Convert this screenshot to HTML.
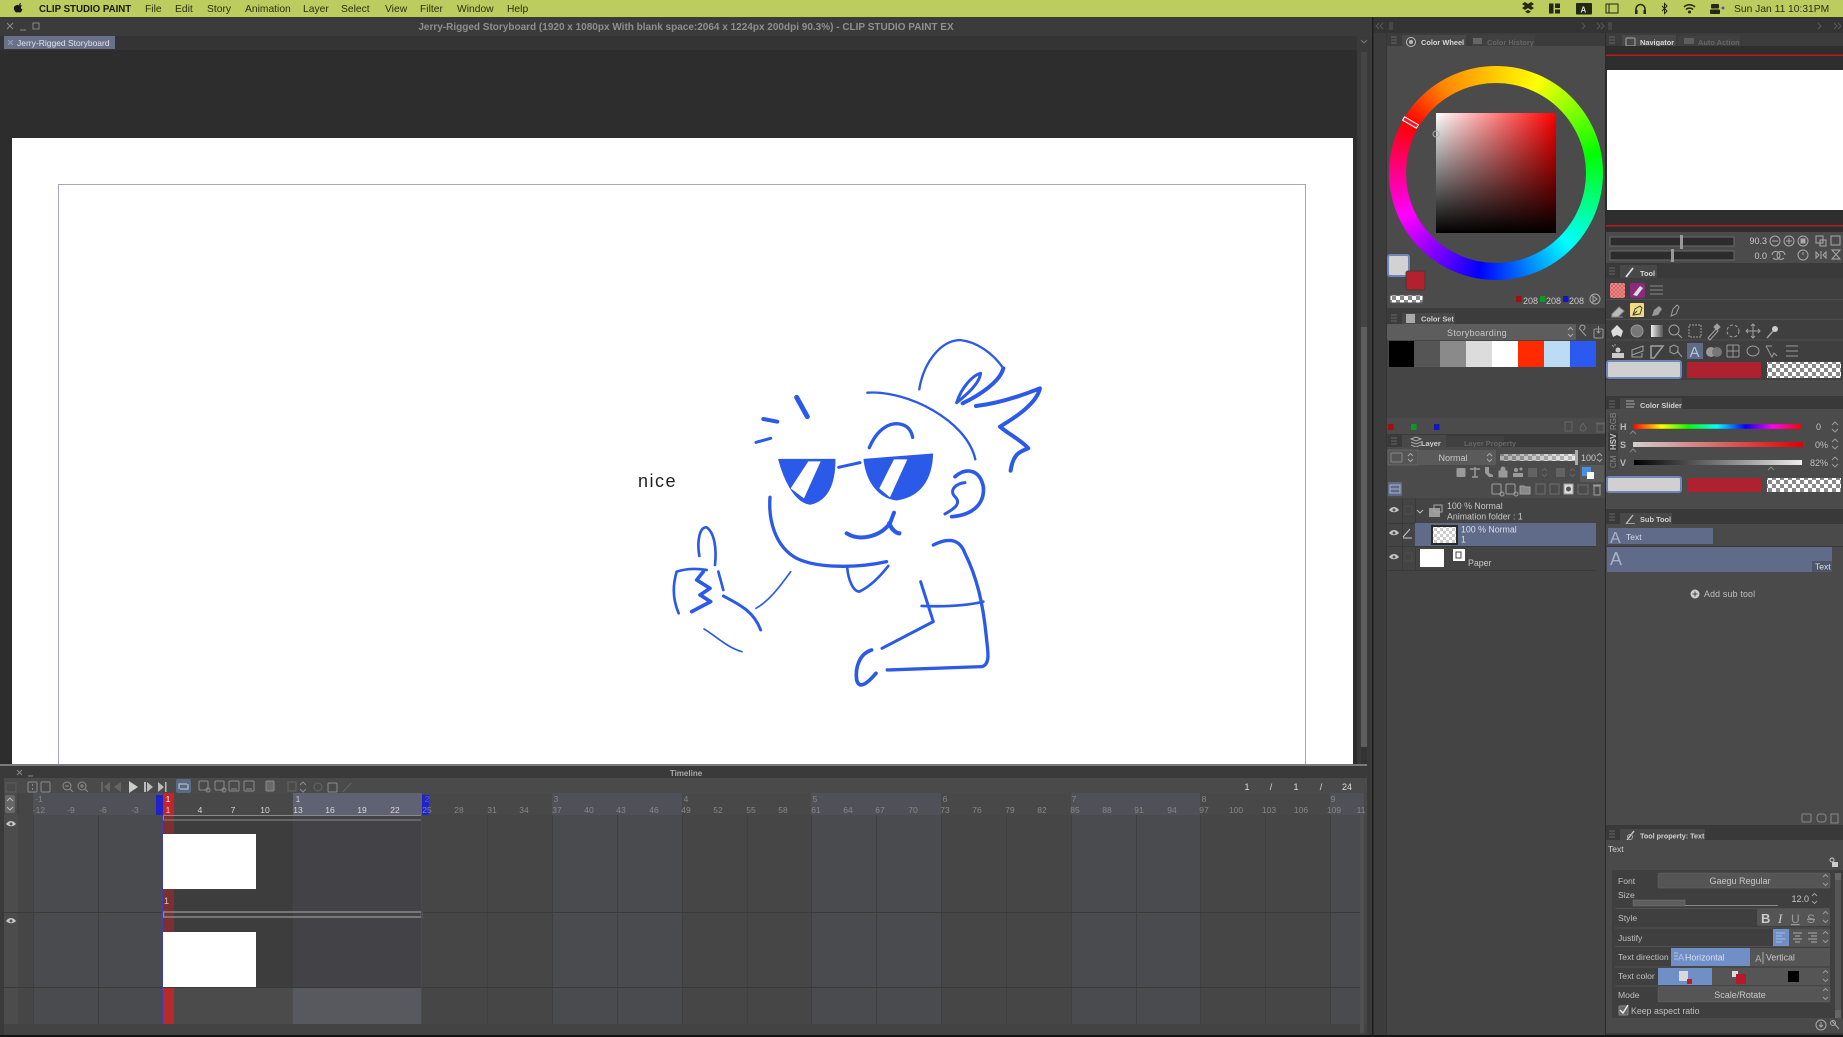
<!DOCTYPE html>
<html lang="en"><head><meta charset="utf-8"><title>Clip Studio Paint</title>
<style>
html,body{margin:0;padding:0;background:#3a3a3a;width:1843px;height:1037px;overflow:hidden}
svg{position:absolute;left:0;top:0;display:block}
svg text{font-family:"Liberation Sans",sans-serif}
#wheel{position:absolute;left:1389px;top:66px;width:214px;height:214px;border-radius:50%;background:conic-gradient(from -60deg,#f00,#f80 8%,#ff0,#0f0,#0ff,#00f,#f0f,#f00)}
#wheel i{position:absolute;left:17px;top:17px;width:180px;height:180px;border-radius:50%;background:#4b4b4b}
#sq{position:absolute;left:1436px;top:113px;width:120px;height:120px;background:linear-gradient(to bottom,rgba(0,0,0,0),#000),linear-gradient(to right,#fff,#f00)}
</style></head><body>
<svg width="1843" height="1037" viewBox="0 0 1843 1037" xmlns="http://www.w3.org/2000/svg">
<defs>
<pattern id="ck" width="8" height="8" patternUnits="userSpaceOnUse"><rect width="8" height="8" fill="#fff"/><rect width="4" height="4" fill="#888"/><rect x="4" y="4" width="4" height="4" fill="#888"/></pattern>
<pattern id="ck2" width="6" height="6" patternUnits="userSpaceOnUse"><rect width="6" height="6" fill="#fff"/><rect width="3" height="3" fill="#ccc"/><rect x="3" y="3" width="3" height="3" fill="#ccc"/></pattern>
<pattern id="hatch" width="4" height="4" patternUnits="userSpaceOnUse"><rect width="4" height="4" fill="#d86060"/><path d="M0 4L4 0M0 0L4 4" stroke="#f0a0a0" stroke-width=".6"/></pattern>
<g id="eye"><path d="M-5 0C-2-4 2-4 5 0C2 3-2 3-5 0Z" fill="#c8c8c8"/><circle r="1.500" fill="#555"/></g>
<g id="grip"><path d="M-3-3H3M-3 0H3M-3 3H3" stroke="#666" stroke-width="1"/></g>
<linearGradient id="hue"><stop offset="0" stop-color="#f00"/><stop offset=".17" stop-color="#ff0"/><stop offset=".33" stop-color="#0f0"/><stop offset=".5" stop-color="#0ff"/><stop offset=".67" stop-color="#00f"/><stop offset=".83" stop-color="#f0f"/><stop offset="1" stop-color="#f00"/></linearGradient>
<linearGradient id="sat"><stop offset="0" stop-color="#d0d0d0"/><stop offset="1" stop-color="#e00000"/></linearGradient>
<linearGradient id="val"><stop offset="0" stop-color="#000"/><stop offset="1" stop-color="#eee"/></linearGradient>
<linearGradient id="op"><stop offset="0" stop-color="#777"/><stop offset="1" stop-color="#ddd"/></linearGradient>
<linearGradient id="gs"><stop offset="0" stop-color="#eee"/><stop offset="1" stop-color="#555"/></linearGradient>
</defs>

<!-- base -->
<rect width="1843" height="1037" fill="#3a3a3a"/>
<!-- menu bar -->
<rect width="1843" height="17" fill="#bdcc5e"/>
<path d="M16 5.500c1-1 2.300-.8 3 0 .7-.4 2-.8 3 .3-1.600 1-1.200 3 .4 3.700-.6 1.600-1.500 3-2.400 3-.8 0-1-.4-1.700-.4s-1 .4-1.700.4c-1.400 0-3-3-2.700-5 .2-1 .9-1.800 2.100-2zM19 5.300c0-1.300.9-2.200 2-2.300.1 1.300-.8 2.200-2 2.300z" fill="#1a1a1a"/>
<g font-size="10.300" fill="#2b3010">
<text x="39" y="12" font-weight="700" font-size="9.700" fill="#181c08">CLIP STUDIO PAINT</text>
<text x="145" y="12">File</text><text x="175" y="12">Edit</text><text x="207" y="12">Story</text><text x="245" y="12">Animation</text><text x="303" y="12">Layer</text><text x="341" y="12">Select</text><text x="385" y="12">View</text><text x="420" y="12">Filter</text><text x="457" y="12">Window</text><text x="507" y="12">Help</text>
</g>
<!-- menu extras -->
<g fill="#232810">
<path d="M1522 4l3 2-3 2 3 2 3-2 3 2 3-2-3-2 3-2-3-2-3 2-3-2zM1525 11.500l3 2 3-2-3-1.500z"/>
<rect x="1549" y="3.500" width="4.500" height="10"/><rect x="1555" y="3.500" width="5" height="4.500"/><rect x="1555" y="9.500" width="5" height="4"/>
<rect x="1576" y="3" width="16" height="11.500" rx="1"/>
<path d="M1606 4h12v9h-12z" fill="none" stroke="#232810"/><path d="M1609 4v9" stroke="#232810"/>
<path d="M1636 12v-3a4.500 4.500 0 0 1 9 0v3" fill="none" stroke="#232810" stroke-width="1.500"/><rect x="1635" y="10" width="2.500" height="4"/><rect x="1643.500" y="10" width="2.500" height="4"/>
<path d="M1662 6l5 5-2.500 2.500v-10l2.500 2.500-5 5" fill="none" stroke="#232810"/>
<path d="M1684 7a8 8 0 0 1 11 0M1686 9.500a5 5 0 0 1 7 0" fill="none" stroke="#232810" stroke-width="1.500"/><circle cx="1689.500" cy="12" r="1.500"/>
<rect x="1711" y="4" width="8" height="4.500" rx="1"/><rect x="1710" y="9.500" width="10" height="4.500" rx="1"/><circle cx="1723" cy="8" r="1.500" fill="#5a4fb0"/>
</g>
<text x="1734" y="12" font-size="10.300" fill="#2b3010">Sun Jan 11</text>
<text x="1788" y="12" font-size="10.300" fill="#2b3010">10:31PM</text>
<text x="1580.500" y="12.500" font-size="8" font-weight="700" fill="#ddd">A</text>

<!-- title bar -->
<rect y="17" width="1373" height="20" fill="#3b3b3b"/>
<path d="M7 23l6 6M13 23l-6 6" stroke="#8a8a8a"/><path d="M20 30h6" stroke="#8a8a8a"/><rect x="33" y="23" width="6" height="6" fill="none" stroke="#8a8a8a"/>
<text x="686" y="30" font-size="10" text-anchor="middle" font-weight="700" fill="#8f8f8f">Jerry-Rigged Storyboard (1920 x 1080px With blank space:2064 x 1224px 200dpi 90.3%)  - CLIP STUDIO PAINT EX</text>
<path d="M1361 40l3 3 3-3" stroke="#777" fill="none"/>
<!-- doc tab -->
<rect y="36" width="1357" height="14" fill="#343434"/>
<rect x="4" y="36" width="111" height="13" fill="#68708a"/>
<path d="M8 40l5 5M13 40l-5 5" stroke="#9aa0b0"/>
<text x="17" y="46" font-size="8.500" fill="#dfe2ea">Jerry-Rigged Storyboard</text>

<!-- canvas -->
<rect y="50" width="1357" height="715" fill="#2d2d2d"/>
<rect x="12" y="138" width="1341" height="627" fill="#fff"/>
<path d="M58.500 765V184.500H1305.500V765" fill="none" stroke="#a6a6c4" stroke-width="1"/>
<rect x="1357" y="50" width="10" height="715" fill="#3a3a3a"/>
<rect x="1361" y="52" width="6" height="275" fill="#444"/><rect x="1361" y="327" width="6" height="420" fill="#5e5e5e"/><rect x="1361" y="747" width="6" height="18" fill="#333"/>
<rect y="764" width="1367" height="2" fill="#7a7a7a"/>

<!-- drawing -->
<g transform="translate(640 320) scale(.3333)" fill="none" stroke="#2c5ae8" stroke-linecap="round" stroke-linejoin="round">
<path d="M838 208C850 130 900 62 960 60C1010 65 1060 100 1090 145" stroke-width="7"/>
<path d="M1090 145C1080 185 1020 225 968 250" stroke-width="12"/>
<path d="M950 248C965 200 1000 165 1022 160C1018 190 985 220 950 248" stroke-width="9"/>
<path d="M1008 258C1080 250 1150 225 1200 205C1190 250 1130 290 1080 320C1110 345 1150 365 1165 385C1140 395 1120 400 1112 452" stroke-width="12"/>
<path d="M682 218C800 210 980 300 1006 418" stroke-width="7"/>
<path d="M688 383C710 330 750 300 790 315C805 320 815 335 818 352" stroke-width="10"/>
<path d="M470 232L502 290" stroke-width="15"/><path d="M370 297L412 305" stroke-width="12"/><path d="M348 367L392 355" stroke-width="9"/>
<path d="M416 418L585 418C585 480 570 540 510 553C460 545 430 470 416 418Z" fill="#2c5ae8" stroke-width="3"/>
<path d="M505 424L542 424L492 535L452 505Z" fill="#fff" stroke="none"/>
<path d="M596 442L660 428" stroke-width="9"/>
<path d="M672 418L878 402C875 480 840 530 770 540C720 535 680 490 672 418Z" fill="#2c5ae8" stroke-width="3"/>
<path d="M762 418L802 418L750 532L718 505Z" fill="#fff" stroke="none"/>
<path d="M390 532C385 600 405 680 470 715C530 745 650 745 740 725" stroke-width="10"/>
<path d="M620 640C660 665 720 650 750 610L762 578" stroke-width="12"/><path d="M748 610C755 630 770 640 778 640" stroke-width="13"/>
<path d="M622 745C625 780 640 815 658 815C690 800 720 770 745 738" stroke-width="8"/>
<path d="M945 470C980 440 1020 450 1030 500C1035 550 1000 585 935 590" stroke-width="11"/>
<path d="M975 488C950 490 925 510 945 530C965 550 945 565 915 582" stroke-width="9"/>
<path d="M880 675C930 650 960 660 975 700C1010 770 1030 850 1040 960C1045 1000 1050 1035 1025 1040L742 1050" stroke-width="10"/>
<path d="M845 858C900 860 970 860 1030 845" stroke-width="8"/>
<path d="M842 785L880 905L726 985" stroke-width="9"/>
<path d="M695 990C660 1000 645 1040 650 1080C655 1100 670 1105 708 1060" stroke-width="11"/>
<path d="M178 708C170 660 180 620 200 622C225 640 230 690 225 735" stroke-width="8"/>
<path d="M116 880C95 830 100 790 110 755C140 745 170 745 200 750" stroke-width="8"/>
<path d="M190 755L170 780L210 805L180 825L212 845L155 875" stroke-width="11"/>
<path d="M235 755L250 810" stroke-width="8"/>
<path d="M250 828C290 850 340 870 362 930" stroke-width="9"/>
<path d="M348 865C385 845 420 800 452 755" stroke-width="5"/>
<path d="M192 927C230 950 265 985 306 995" stroke-width="5"/>
</g>
<text x="638" y="487" font-size="18" letter-spacing="1.500" fill="#222">nice</text>

<!-- timeline -->
<rect y="766" width="1367" height="12" fill="#3a3a3a"/>
<path d="M17 770l5 5M22 770l-5 5" stroke="#888"/><path d="M28 776h5" stroke="#888"/>
<text x="686" y="776" font-size="8" font-weight="700" text-anchor="middle" fill="#aaa">Timeline</text>
<rect y="778" width="1367" height="15" fill="#4a4a4a"/>
<rect y="793" width="1367" height="22" fill="#484848"/>
<rect y="815" width="1367" height="209" fill="#464646"/>
<rect y="1024" width="1367" height="11" fill="#434343"/>
<rect y="1035" width="1843" height="2" fill="#141414"/>
<rect x="1360" y="815" width="4" height="218" fill="#515151"/>
<rect x="0" y="778" width="4" height="257" fill="#3a3a3a"/>
<rect x="4" y="793" width="14" height="231" fill="#4c4c4c"/>
<rect x="18" y="793" width="15" height="231" fill="#464646"/>
<!-- bands -->
<g fill="#4a4b4f">
<rect x="33" y="815" width="130" height="209"/><rect x="293" y="815" width="129" height="209"/><rect x="552" y="815" width="130" height="209"/><rect x="811" y="815" width="130" height="209"/><rect x="1071" y="815" width="129" height="209"/><rect x="1330" y="815" width="30" height="209"/>
</g>
<g fill="#505158">
<rect x="33" y="793" width="130" height="22"/><rect x="552" y="793" width="130" height="22"/><rect x="811" y="793" width="130" height="22"/><rect x="1071" y="793" width="129" height="22"/><rect x="1330" y="793" width="34" height="22"/>
</g>
<rect x="293" y="793" width="129" height="22" fill="#5f6272"/>
<g stroke="#3f3f3f" stroke-width="1">
<path d="M33.500 815V1024M98.500 815V1024M228.500 815V1024M358.500 815V1024M487.500 815V1024M617.500 815V1024M747.500 815V1024M876.500 815V1024M1006.500 815V1024M1136.500 815V1024M1265.500 815V1024M552.500 815V1024M682.500 815V1024M811.500 815V1024M941.500 815V1024M1071.500 815V1024M1200.500 815V1024M1330.500 815V1024"/>
</g>
<!-- track active -->
<rect x="163" y="815" width="258" height="172" fill="#3d3d3d"/>
<rect x="293" y="815" width="128" height="172" fill="#434347"/>
<rect x="163" y="987" width="130" height="37" fill="#4b4b4b"/>
<rect x="293" y="987" width="128" height="37" fill="#58595e"/>
<rect x="163" y="815" width="11" height="172" fill="#7a3030"/>
<rect x="162" y="987" width="12" height="37" fill="#b52a2a"/>
<rect x="163" y="834" width="93" height="55" fill="#fff"/>
<rect x="163" y="932" width="93" height="55" fill="#fff"/>
<path d="M0 912.500H1360M0 987.500H1360" stroke="#3a3a3a"/>
<rect x="163.500" y="815.500" width="258" height="4.500" fill="none" stroke="#8a8a8a"/>
<rect x="163.500" y="912" width="258" height="5" fill="none" stroke="#8a8a8a" stroke-width="1.500"/>
<path d="M162.500 815V1024M421.500 815V1024" stroke="#3f3fa8"/>
<text x="164" y="904" font-size="9" fill="#ccc">1</text>
<!-- ruler flags -->
<rect x="156" y="795" width="7" height="20" fill="#1f24c8"/><rect x="422" y="795" width="7" height="20" fill="#1f24c8"/>
<rect x="163" y="793" width="11" height="22" fill="#c2262a"/>
<path d="M18 793v22M4 793v22" stroke="#3d3d3d"/>
<rect x="5" y="795" width="10" height="18" rx="2" fill="#666"/>
<path d="M7 801l3-3 3 3M7 807l3 3 3-3" fill="none" stroke="#bbb"/>
<use href="#eye" x="11" y="824"/><use href="#eye" x="11" y="921"/>
<!-- ruler labels -->
<g font-size="8.500" text-anchor="middle" fill="#878787">
<text x="39" y="802">-1</text><text x="168" y="802" fill="#fff">1</text><text x="298" y="802" fill="#d0d0d0">1</text><text x="427" y="802" fill="#5a60d0">2</text><text x="556" y="802">3</text><text x="686" y="802">4</text><text x="815" y="802">5</text><text x="945" y="802">6</text><text x="1074" y="802">7</text><text x="1204" y="802">8</text><text x="1333" y="802">9</text>
<text x="39" y="813">-12</text><text x="71" y="813">-9</text><text x="103" y="813">-6</text><text x="135" y="813">-3</text>
<g fill="#d8d8d8"><text x="168" y="813">1</text><text x="200" y="813">4</text><text x="233" y="813">7</text><text x="265" y="813">10</text><text x="298" y="813">13</text><text x="330" y="813">16</text><text x="362" y="813">19</text><text x="395" y="813">22</text></g>
<text x="427" y="813">25</text><text x="459" y="813">28</text><text x="492" y="813">31</text><text x="524" y="813">34</text><text x="557" y="813">37</text><text x="589" y="813">40</text><text x="621" y="813">43</text><text x="654" y="813">46</text><text x="686" y="813">49</text><text x="718" y="813">52</text><text x="751" y="813">55</text><text x="783" y="813">58</text><text x="816" y="813">61</text><text x="848" y="813">64</text><text x="880" y="813">67</text><text x="913" y="813">70</text><text x="945" y="813">73</text><text x="977" y="813">76</text><text x="1010" y="813">79</text><text x="1042" y="813">82</text><text x="1075" y="813">85</text><text x="1107" y="813">88</text><text x="1139" y="813">91</text><text x="1172" y="813">94</text><text x="1204" y="813">97</text><text x="1236" y="813">100</text><text x="1269" y="813">103</text><text x="1301" y="813">106</text><text x="1334" y="813">109</text><text x="1361" y="813">11</text>
</g>
<!-- timeline toolbar -->
<rect x="176" y="779" width="15" height="14" rx="2" fill="#5a6a85"/>
<g fill="none" stroke="#8c8c8c" stroke-width="1">
<rect x="6" y="783" width="10" height="9" stroke="#5e5e5e"/>
<rect x="28" y="782" width="9" height="10" rx="1"/><path d="M32.500 784v2M32.500 788v2"/><rect x="41" y="782" width="9" height="10" rx="1"/>
<circle cx="67" cy="786" r="4"/><path d="M70 789l3 3M65 786h4"/>
<circle cx="82" cy="786" r="4"/><path d="M85 789l3 3M80 786h4M82 784v4"/>
<path d="M180 789h8v-5M187 784h-8v5" stroke="#c8d0e0"/>
<rect x="199" y="781" width="9" height="9" rx="1"/><circle cx="208" cy="790" r="2"/><rect x="215" y="781" width="9" height="9" rx="1"/><circle cx="224" cy="790" r="2"/><rect x="229" y="781" width="10" height="10" rx="1"/><path d="M231 789h6"/><rect x="244" y="781" width="10" height="10" rx="1"/><path d="M246 789h6"/><rect x="266" y="781" width="8" height="10" rx="1" fill="#6a6a6a"/>
<rect x="288" y="782" width="8" height="9" stroke="#666"/><path d="M300 785l3-3 3 3M300 789l3 3 3-3"/><circle cx="318" cy="787" r="4" stroke="#666"/>
<rect x="328" y="783" width="9" height="9" rx="1"/><path d="M343 792l8-9" stroke="#666"/>
</g>
<g><rect x="101" y="782" width="2" height="10" fill="#666"/><path d="M104 787l6-5v10z" fill="#666"/><path d="M114 787l7-5v10z" fill="#666"/><path d="M129 781l9 6-9 6z" fill="#ccc"/><rect x="144" y="782" width="2" height="10" fill="#bbb"/><path d="M147 782l6 5-6 5z" fill="#bbb"/><path d="M158 782l6 5-6 5z" fill="#bbb"/><rect x="165" y="782" width="1.500" height="10" fill="#bbb"/></g>
<g font-size="9" fill="#ddd" text-anchor="middle"><text x="1247" y="790">1</text><text x="1271" y="790">/</text><text x="1296" y="790">1</text><text x="1321" y="790">/</text><text x="1347" y="790">24</text></g>

<!-- right dock -->
<rect x="1372" y="17" width="1.500" height="1020" fill="#1e1e1e"/>
<rect x="1374" y="17" width="469" height="1018" fill="#3c3c3c"/>
<rect x="1374" y="17" width="469" height="16" fill="#343434"/>
<g fill="none" stroke="#5a5a5a"><path d="M1379 23l-3 3 3 3M1383 23l-3 3 3 3M1390 22v8M1392 22v8M1582 23l3 3-3 3M1597 23l3 3-3 3M1601 23l3 3-3 3M1609 22v8M1611 22v8M1818 23l3 3-3 3M1834 23l3 3-3 3M1838 23l3 3-3 3"/></g>
<!-- color wheel panel -->
<rect x="1387" y="46" width="218" height="262" fill="#4b4b4b"/>
<rect x="1402" y="35" width="64" height="11" fill="#484848"/><rect x="1472" y="35" width="63" height="11" fill="#404040"/>
<use href="#grip" x="1394" y="40"/>
<circle cx="1411" cy="42" r="4.500" fill="none" stroke="#bbb"/><circle cx="1411" cy="42" r="2" fill="#bbb"/>
<text x="1421" y="45" font-size="7.400" font-weight="700" fill="#d8d8d8">Color Wheel</text>
<rect x="1473" y="38" width="9" height="6" fill="#666"/><text x="1487" y="45" font-size="7.400" font-weight="700" fill="#666">Color History</text>
<!-- swatches -->
<rect x="1388" y="255" width="21" height="21" rx="2" fill="#d2d2d2" stroke="#7085b8" stroke-width="2"/>
<rect x="1406" y="271" width="19" height="19" rx="2" fill="#b3202e" stroke="#3e3e3e"/>
<rect x="1390" y="295" width="33" height="8" fill="url(#ck)" stroke="#555"/>
<rect x="1516" y="296" width="5.500" height="6" fill="#a01010"/><rect x="1540" y="296" width="5.500" height="6" fill="#0a9a2a"/><rect x="1563" y="296" width="5.500" height="6" fill="#1414c0"/>
<g font-size="9" fill="#c8c8c8"><text x="1523" y="304">208</text><text x="1546" y="304">208</text><text x="1569" y="304">208</text></g>
<circle cx="1595" cy="299" r="5" fill="none" stroke="#aaa"/><path d="M1593 296l4 3-4 3z" fill="none" stroke="#aaa"/>
<!-- color set -->
<rect x="1387" y="308" width="218" height="5" fill="#3c3c3c"/>
<rect x="1402" y="313" width="53" height="11" fill="#484848"/><use href="#grip" x="1394" y="318"/>
<rect x="1406" y="314" width="9" height="9" fill="#aaa"/>
<text x="1421" y="321.500" font-size="7.400" font-weight="700" fill="#cfcfcf">Color Set</text>
<rect x="1387" y="324" width="218" height="94" fill="#454545"/>
<rect x="1387" y="324" width="189" height="16" rx="1" fill="#5d5d5d"/>
<text x="1477" y="336" font-size="9" text-anchor="middle" letter-spacing=".3" fill="#c8c8c8">Storyboarding</text>
<path d="M1568 330l2.500-2.500 2.500 2.500M1568 334l2.500 2.500 2.500-2.500" fill="none" stroke="#aaa"/>
<path d="M1579 328l7 8M1583 330a2.500 2.500 0 1 0-3-2" fill="none" stroke="#999" stroke-width="1.200"/><rect x="1594" y="329" width="9" height="9" rx="1" fill="none" stroke="#999"/><path d="M1598.500 326v7m-2-2l2 2 2-2" fill="none" stroke="#999"/>
<rect x="1389" y="341" width="25" height="26" fill="#000"/><rect x="1414" y="341" width="26" height="26" fill="#555"/><rect x="1440" y="341" width="26" height="26" fill="#8a8a8a"/><rect x="1466" y="341" width="26" height="26" fill="#dcdcdc"/><rect x="1492" y="341" width="26" height="26" fill="#fff"/><rect x="1518" y="341" width="26" height="26" fill="#ff2a00"/><rect x="1544" y="341" width="26" height="26" fill="#bcdcf5"/><rect x="1570" y="341" width="26" height="26" fill="#2c5af0"/>
<rect x="1387" y="418" width="218" height="16" fill="#4b4b4b"/>
<rect x="1388" y="424" width="5.500" height="6" fill="#a01010"/><rect x="1411" y="424" width="5.500" height="6" fill="#0a9a2a"/><rect x="1434" y="424" width="5.500" height="6" fill="#1414c0"/>
<g fill="none" stroke="#666"><rect x="1565" y="422" width="7" height="9"/><path d="M1583 423l-3 5a3 3 0 0 0 6 0zM1597 424h7v8h-7zM1596 423h9"/></g>
<!-- layer -->
<rect x="1387" y="434" width="218" height="13" fill="#3a3a3a"/>
<rect x="1402" y="435" width="44" height="12" fill="#484848"/><rect x="1446" y="436" width="58" height="11" fill="#404040"/><use href="#grip" x="1394" y="441"/>
<path d="M1411 439l5-2 5 2-5 2zM1411 442l5 2 5-2M1411 445l5 2 5-2" fill="none" stroke="#aaa"/>
<text x="1421" y="446" font-size="7.400" font-weight="700" fill="#cfcfcf">Layer</text>
<text x="1464" y="446" font-size="7.400" font-weight="700" fill="#666">Layer Property</text>
<rect x="1387" y="447" width="218" height="51" fill="#4b4b4b"/>
<rect x="1388" y="450" width="30" height="15" rx="1" fill="#555" stroke="#666"/><rect x="1391" y="453" width="11" height="9" rx="1" fill="none" stroke="#888"/><path d="M1408 456l2.500-2.500 2.500 2.500M1408 459l2.500 2.500 2.500-2.500" fill="none" stroke="#aaa"/>
<rect x="1418" y="450" width="78" height="15" rx="1" fill="#5a5a5a"/>
<text x="1453" y="461" font-size="9" text-anchor="middle" fill="#c8c8c8">Normal</text>
<path d="M1487 456l2.500-2.500 2.500 2.500M1487 459l2.500 2.500 2.500-2.500" fill="none" stroke="#aaa"/>
<rect x="1500" y="454" width="76" height="7" fill="url(#ck)"/><rect x="1500" y="454" width="76" height="7" fill="url(#op)" opacity=".6"/><rect x="1575" y="450" width="3" height="15" fill="#aaa"/>
<text x="1581" y="461" font-size="9" fill="#c8c8c8">100</text>
<path d="M1597 456l2.500-2.500 2.500 2.500M1597 459l2.500 2.500 2.500-2.500" fill="none" stroke="#aaa"/>
<g fill="#9a9a9a"><rect x="1456.500" y="468" width="9" height="9" rx="1"/><path d="M1470 469h10M1475 467v10M1472 477h6" stroke="#9a9a9a" fill="none" stroke-width="1.500"/><path d="M1485 467h4v6l4 2v2h-4l-4-4z"/><path d="M1499 471h8v6h-8zM1501 471v-2a2 2 0 0 1 4 0v2" stroke="#9a9a9a" fill="#9a9a9a"/><circle cx="1516" cy="470" r="2"/><circle cx="1521" cy="469" r="1.500"/><rect x="1513" y="473" width="10" height="4"/><rect x="1528" y="468" width="9" height="9" opacity=".3"/><rect x="1556" y="468" width="9" height="9" opacity=".3"/></g>
<path d="M1542 471l2.500-2.500 2.500 2.500M1542 474l2.500 2.500 2.500-2.500M1570 471l2.500-2.500 2.500 2.500M1570 474l2.500 2.500 2.500-2.500" fill="none" stroke="#666"/>
<rect x="1580" y="465" width="24" height="17" rx="1" fill="#5a5a5a"/><rect x="1582" y="467" width="9" height="9" fill="#4a90e0"/><rect x="1587" y="472" width="7" height="7" fill="#fff"/>
<rect x="1388" y="482" width="14" height="14" rx="1" fill="#5f6b88"/><path d="M1390 489h10M1390 485h10v8h-10z" fill="none" stroke="#a8b0c4"/>
<g fill="none" stroke="#a0a0a0"><rect x="1492" y="484" width="9" height="10" rx="1"/><circle cx="1502" cy="494" r="2"/><rect x="1506" y="484" width="9" height="10" rx="1"/><circle cx="1516" cy="494" r="2"/><path d="M1520 494v-8h4l1 1h5v7z" fill="#888"/><rect x="1536" y="484" width="9" height="10" opacity=".4"/><rect x="1550" y="484" width="9" height="10" opacity=".4"/><rect x="1564" y="484" width="9" height="10" fill="#ddd"/><circle cx="1568.500" cy="489" r="2.500" fill="#555" stroke="none"/><rect x="1578" y="485" width="10" height="9" opacity=".4"/><path d="M1594 486h6v9h-6zM1593 485h8"/></g>
<!-- layer rows -->
<rect x="1387" y="498" width="218" height="537" fill="#444"/>
<path d="M1402.500 498V570M1415.500 498V570M1387 523.500H1596M1387 546.500H1596M1387 570.500H1596" stroke="#3a3a3a"/>
<rect x="1415" y="523" width="181" height="23" fill="#5f6b88"/>
<rect x="1431" y="525" width="27" height="20" fill="#2a2a2a"/><rect x="1433" y="527" width="23" height="16" fill="url(#ck2)"/>
<use href="#eye" x="1394" y="510"/><use href="#eye" x="1394" y="533"/><use href="#eye" x="1394" y="557"/>
<path d="M1403 537l7-8M1403 538h9" stroke="#c8c8c8" fill="none"/>
<rect x="1405" y="506" width="7" height="8" fill="none" stroke="#4e4e4e"/><rect x="1405" y="553" width="7" height="8" fill="none" stroke="#4e4e4e"/>
<path d="M1417 510l3 3 3-3" stroke="#bbb" fill="none"/>
<rect x="1429" y="508" width="11" height="9" fill="#9a9a9a"/><rect x="1434" y="505" width="8" height="7" fill="none" stroke="#aaa"/>
<g font-size="8.800" fill="#c8c8c8"><text x="1447" y="509">100 % Normal</text><text x="1447" y="519.500">Animation folder : 1</text><text x="1461" y="532.500" fill="#dde">100 % Normal</text><text x="1461" y="542.500" fill="#dde">1</text><text x="1468" y="566">Paper</text></g>
<rect x="1420" y="549" width="24" height="18" fill="#fff"/>
<rect x="1453" y="549" width="12" height="12" fill="#fff"/><path d="M1456 552h5v6h-5z" fill="none" stroke="#444"/>

<!-- navigator -->
<rect x="1605" y="33" width="238" height="2" fill="#3c3c3c"/>
<rect x="1622" y="35" width="54" height="11" fill="#484848"/><rect x="1678" y="36" width="62" height="10" fill="#404040"/>
<use href="#grip" x="1612" y="40"/>
<rect x="1626" y="38" width="9" height="8" rx="1" fill="none" stroke="#aaa"/><rect x="1684" y="38" width="10" height="6" fill="#5e5e5e"/>
<text x="1640" y="45" font-size="7.400" font-weight="700" fill="#d8d8d8">Navigator</text>
<text x="1698" y="45" font-size="7.400" font-weight="700" fill="#666">Auto Action</text>
<rect x="1606" y="46" width="237" height="186" fill="#2e2e2e"/>
<rect x="1606" y="54.500" width="237" height="1.500" fill="#b81c1c"/>
<rect x="1607" y="70" width="236" height="140" fill="#fff"/>
<rect x="1606" y="225" width="237" height="1.500" fill="#b81c1c"/>
<rect x="1606" y="232" width="237" height="31" fill="#4b4b4b"/>
<rect x="1610" y="237" width="124" height="9" fill="#2c2c2c" stroke="#6a6a6a"/><rect x="1610" y="251" width="124" height="9" fill="#2c2c2c" stroke="#6a6a6a"/>
<rect x="1680" y="235" width="3" height="14" fill="#999"/><rect x="1671" y="249" width="3" height="13" fill="#999"/>
<g font-size="9" fill="#c8c8c8" text-anchor="end"><text x="1767" y="244">90.3</text><text x="1767" y="259">0.0</text></g>
<g fill="none" stroke="#aaa"><circle cx="1775" cy="241" r="5"/><path d="M1772 241h6"/><circle cx="1789" cy="241" r="5"/><path d="M1786 241h6M1789 238v6"/><circle cx="1803" cy="241" r="5"/><rect x="1801" y="239" width="4" height="4" fill="#aaa"/><rect x="1816" y="236" width="7" height="7"/><rect x="1820" y="240" width="6" height="6"/><rect x="1831" y="236" width="9" height="9"/><path d="M1772 255a4 4 0 1 1 1 3M1785 255a4 4 0 1 0-1 3"/><circle cx="1803" cy="255" r="5"/><path d="M1803 252v3M1821 251v8M1816 252l3 3-3 3zM1826 252l-3 3 3 3zM1832 250h8l-8 9h8z"/></g>
<!-- tool -->
<rect x="1606" y="263" width="237" height="15" fill="#3a3a3a"/>
<rect x="1620" y="265" width="37" height="13" fill="#484848"/><use href="#grip" x="1612" y="271"/>
<path d="M1626 277l7-9" stroke="#ddd" stroke-width="1.800"/>
<text x="1640" y="276" font-size="7.400" font-weight="700" fill="#d8d8d8">Tool</text>
<rect x="1606" y="278" width="237" height="102" fill="#3f3f3f"/>
<path d="M1606 299.500H1843M1606 319.500H1843M1606 340H1843" stroke="#4d4d4d"/>
<rect x="1610" y="283" width="15" height="15" rx="2" fill="url(#hatch)"/><rect x="1630" y="283" width="15" height="15" rx="2" fill="#8a2a7a"/>
<path d="M1633 295l7-9 3 2-6 8z" fill="#ddd"/>
<path d="M1650 286h13M1650 290h13M1650 294h13" stroke="#8a8a8a"/>
<rect x="1630" y="303" width="14" height="14" rx="1" fill="#f2dc82"/>
<!-- row 2 -->
<path d="M1612 314l7-7 5 4-6 6h-6zM1611 317h12" fill="#bbb" stroke="#888"/>
<path d="M1633 315l2-6 5-3 2 2-2 6z" fill="none" stroke="#443"/><path d="M1633 315l4-4" stroke="#443"/>
<path d="M1652 316l2-6 5-4 3 3-4 6z" fill="#999"/><path d="M1671 316l2-7 4-4 2 2-3 7z" fill="none" stroke="#9a9a9a"/>
<!-- row 3 -->
<path d="M1611 331l6-6 6 6-2 6-4-2-4 2z" fill="#ddd"/>
<circle cx="1637" cy="331" r="6" fill="#777" stroke="#999"/>
<rect x="1651" y="325" width="12" height="12" fill="url(#gs)"/>
<g fill="none" stroke="#a0a0a0"><circle cx="1674" cy="330" r="5"/><path d="M1678 334l4 4"/><rect x="1689" y="325" width="12" height="12" stroke-dasharray="2 1"/><path d="M1708 338l8-9 2 2-8 9z"/><path d="M1714 327l3-3 3 3-3 3z" fill="#a0a0a0"/><circle cx="1733" cy="331" r="6" stroke-dasharray="3 2"/><path d="M1746 331h14M1753 324v14M1748 329l-2 2 2 2M1758 329l2 2-2 2M1751 326l2-2 2 2M1751 336l2 2 2-2"/><path d="M1767 338l7-8" stroke-width="1.500"/></g>
<circle cx="1775" cy="329" r="3" fill="#ccc"/>
<!-- row 4 -->
<rect x="1612" y="353" width="12" height="5" fill="#ccc"/><circle cx="1618" cy="350" r="2.500" fill="#ccc"/><path d="M1612 345l2 2M1615 344v2" stroke="#999"/>
<g fill="none" stroke="#a0a0a0"><path d="M1632 350l11-4v5l-11 4zM1632 353v4h10v-4"/><path d="M1651 346h12l-9 12h-3z" stroke-width="1.500"/><path d="M1670 347l4-2 4 2v5l-4 2-4-2z"/><path d="M1677 351l5 6"/></g>
<rect x="1687" y="343" width="16" height="16" fill="#5f6b88"/>
<text x="1689.500" y="357" font-size="15" fill="#b8c2dc">A</text>
<g fill="#9a9a9a"><circle cx="1711" cy="352" r="5"/><circle cx="1717" cy="352" r="5" fill="#777"/></g>
<g fill="none" stroke="#9a9a9a"><rect x="1727" y="345" width="12" height="12" rx="1"/><path d="M1733 345v12M1727 351h12"/><ellipse cx="1753" cy="351" rx="6" ry="5"/><path d="M1766 346l6 11 2-4 3 3M1766 346h6"/><path d="M1786 346h12M1786 351h12M1786 356h12"/></g>
<rect x="1607" y="361" width="74" height="17" rx="2" fill="#d0d0d0" stroke="#7085b8" stroke-width="2"/>
<rect x="1687" y="362" width="74" height="16" rx="1" fill="#ae2230"/>
<rect x="1767" y="362" width="74" height="16" fill="url(#ck)"/>

<!-- color slider -->
<rect x="1606" y="380" width="237" height="20" fill="#4a4a4a"/>
<rect x="1606" y="396" width="237" height="13" fill="#393939"/>
<rect x="1620" y="398" width="62" height="11" fill="#484848"/><use href="#grip" x="1612" y="404"/>
<path d="M1626 401h8M1626 404h9M1626 407h8" stroke="#aaa"/>
<text x="1640" y="408" font-size="7.400" font-weight="700" fill="#d0d0d0">Color Slider</text>
<rect x="1606" y="409" width="237" height="88" fill="#4b4b4b"/>
<rect x="1608" y="415" width="10" height="55" fill="#444"/><rect x="1608" y="433" width="10" height="18" fill="#3a3a3a"/>
<g font-size="8" fill="#888"><text transform="translate(1616 430) rotate(-90)">RGB</text><text transform="translate(1616 450) rotate(-90)" font-weight="700" fill="#c8c8c8">HSV</text><text transform="translate(1616 468) rotate(-90)">CM</text></g>
<g font-size="9" font-weight="700" fill="#b8b8b8"><text x="1620" y="430">H</text><text x="1620" y="448">S</text><text x="1620" y="466">V</text></g>
<rect x="1633" y="424" width="168" height="5" fill="url(#hue)" stroke="#7a3a3a" stroke-width=".5"/>
<rect x="1633" y="442" width="170" height="5" fill="url(#sat)"/>
<rect x="1634" y="460" width="168" height="5" fill="url(#val)"/>
<path d="M1630 434l3-3 3 3M1630 452l3-3 3 3M1768 470l3-3 3 3" fill="none" stroke="#888"/>
<g font-size="9" fill="#c0c0c0" text-anchor="end"><text x="1821" y="430">0</text><text x="1828" y="448">0%</text><text x="1828" y="466">82%</text></g>
<path d="M1832 425l3-3 3 3M1832 429l3 3 3-3M1832 442l3-3 3 3M1832 446l3 3 3-3M1832 460l3-3 3 3M1832 464l3 3 3-3" fill="none" stroke="#999"/>
<rect x="1607" y="477" width="74" height="15" rx="2" fill="#d0d0d0" stroke="#7085b8" stroke-width="2"/>
<rect x="1687" y="478" width="74" height="14" rx="1" fill="#ae2230"/>
<rect x="1767" y="478" width="74" height="14" fill="url(#ck)"/>
<rect x="1606" y="497" width="237" height="12" fill="#4b4b4b"/>

<!-- sub tool -->
<rect x="1606" y="509" width="237" height="15" fill="#393939"/>
<rect x="1620" y="513" width="52" height="11" fill="#484848"/><use href="#grip" x="1612" y="517"/>
<path d="M1626 524l7-9M1626 524h9" stroke="#bbb" stroke-width="1.400" fill="none"/>
<text x="1640" y="522" font-size="7.400" font-weight="700" fill="#d0d0d0">Sub Tool</text>
<rect x="1606" y="524" width="237" height="286" fill="#4a4a4a"/>
<rect x="1606" y="546" width="237" height="1" fill="#3a3a3a"/>
<rect x="1608" y="528" width="105" height="16" fill="#5f6b88"/>
<text x="1610" y="543" font-size="16" fill="#aab2c8">A</text>
<text x="1626" y="540" font-size="8.500" fill="#d8dce8">Text</text>
<rect x="1607" y="547" width="225" height="25" fill="#5f6b88"/>
<text x="1610" y="565" font-size="18" fill="#aab2c8">A</text>
<rect x="1812" y="561" width="20" height="11" fill="#4d556b"/>
<text x="1815" y="569.500" font-size="8.500" fill="#dfe2ea">Text</text>
<circle cx="1695" cy="594" r="4.500" fill="#cfcfcf"/><path d="M1692.500 594h5M1695 591.500v5" stroke="#444"/>
<text x="1704" y="597" font-size="8.800" letter-spacing=".2" fill="#c0c0c0">Add sub tool</text>
<rect x="1606" y="810" width="237" height="15" fill="#4a4a4a"/>
<g fill="none" stroke="#888"><rect x="1802" y="814" width="9" height="8" rx="1"/><rect x="1817" y="814" width="9" height="8" rx="3"/><rect x="1831" y="814" width="7" height="9"/></g>

<!-- tool property -->
<rect x="1606" y="825" width="237" height="15" fill="#393939"/>
<rect x="1620" y="829" width="85" height="11" fill="#484848"/><use href="#grip" x="1612" y="834"/>
<path d="M1627 840l7-9" stroke="#ccc" stroke-width="1.400"/><circle cx="1630" cy="837" r="2.500" fill="none" stroke="#aaa"/>
<text x="1640" y="838.500" font-size="7.200" font-weight="700" fill="#d0d0d0">Tool property: Text</text>
<rect x="1606" y="840" width="237" height="30" fill="#4a4a4a"/>
<text x="1608" y="852" font-size="8.500" fill="#d0d0d0">Text</text>
<rect x="1832" y="862" width="6" height="5" fill="#ccc"/><circle cx="1832" cy="860" r="2" fill="none" stroke="#ccc"/>
<rect x="1612" y="870" width="223" height="148" fill="#3f3f3f"/>
<rect x="1835" y="873" width="6" height="145" fill="#555"/><rect x="1835" y="873" width="6" height="7" fill="#666"/><rect x="1835" y="1010" width="6" height="8" fill="#666"/>
<rect x="1606" y="870" width="6" height="148" fill="#4a4a4a"/>
<path d="M1615 908.500H1830M1615 928H1830M1615 946.500H1830M1615 967H1830M1615 986H1830" stroke="#515151"/>
<g font-size="8.600" fill="#c0c0c0">
<text x="1618" y="884">Font</text><text x="1618" y="898">Size</text><text x="1618" y="921">Style</text><text x="1618" y="941">Justify</text><text x="1618" y="960">Text direction</text><text x="1618" y="979">Text color</text><text x="1618" y="998">Mode</text>
</g>
<rect x="1658" y="873" width="172" height="15" rx="1" fill="#555" stroke="#666" stroke-width=".5"/>
<text x="1740" y="884" font-size="9" text-anchor="middle" fill="#c8c8c8">Gaegu Regular</text>
<rect x="1633" y="900" width="52" height="6" fill="#5e5e5e" stroke="#777" stroke-width=".5"/>
<path d="M1685 905.500H1778" stroke="#888"/>
<text x="1809" y="902" font-size="9" text-anchor="end" fill="#c8c8c8">12.0</text>
<rect x="1757" y="909" width="73" height="17" rx="2" fill="#555"/>
<text x="1761" y="923" font-size="13" font-weight="700" fill="#ccc">B</text>
<text x="1778" y="923" font-size="13" font-style="italic" style="font-family:'Liberation Serif',serif" fill="#ccc">I</text>
<text x="1791" y="923" font-size="12" text-decoration="underline" fill="#999">U</text>
<text x="1807" y="923" font-size="12" text-decoration="line-through" fill="#999">S</text>
<rect x="1773" y="929" width="57" height="17" fill="#555"/><rect x="1773" y="929" width="16" height="17" fill="#6f8fc6"/>
<path d="M1776 933h9M1776 936h6M1776 939h9M1776 942h6" stroke="#a8bce0"/><path d="M1793 933h9M1795 936h5M1793 939h9M1795 942h5M1808 933h9M1811 936h6M1808 939h9M1811 942h6" stroke="#aaa"/>
<rect x="1750" y="948" width="80" height="18" fill="#555"/>
<rect x="1671" y="948" width="79" height="18" fill="#6f8fc6"/>
<text x="1685" y="960.500" font-size="8.800" fill="#d8e0f0">Horizontal</text>
<path d="M1674 953h4M1674 956h4M1674 959h4" stroke="#b0c4e4"/><text x="1678" y="960.500" font-size="9" fill="#b0c4e4">A</text>
<text x="1755" y="962" font-size="10" fill="#aaa">A</text><path d="M1763 952v12" stroke="#aaa"/>
<text x="1766" y="960.500" font-size="8.800" fill="#c8c8c8">Vertical</text>
<rect x="1658" y="968" width="172" height="17" fill="#555"/><rect x="1658" y="968" width="54" height="17" fill="#6f8fc6"/>
<rect x="1679" y="971" width="9" height="10" fill="#d8d8d8"/><rect x="1687" y="979" width="5" height="5" fill="#c0182c"/>
<rect x="1732" y="971" width="6" height="6" fill="#ddd"/><rect x="1736" y="974" width="10" height="10" fill="#b8182a"/>
<rect x="1788" y="971" width="11" height="11" fill="#000"/>
<rect x="1658" y="987" width="172" height="15" rx="1" fill="#555" stroke="#666" stroke-width=".5"/>
<text x="1740" y="998" font-size="9" text-anchor="middle" fill="#c8c8c8">Scale/Rotate</text>
<path d="M1823 877l2.500-2.500 2.500 2.500M1823 883l2.500 2.500 2.500-2.500M1823 914l2.500-2.500 2.500 2.500M1823 920l2.500 2.500 2.500-2.500M1823 934l2.500-2.500 2.500 2.500M1823 940l2.500 2.500 2.500-2.500M1823 973l2.500-2.500 2.500 2.500M1823 979l2.500 2.500 2.500-2.500M1823 991l2.500-2.500 2.500 2.500M1823 997l2.500 2.500 2.500-2.500M1812 896l2.500-2.500 2.500 2.500M1812 901l2.500 2.500 2.500-2.500" fill="none" stroke="#999"/>
<rect x="1619" y="1006" width="9" height="9" rx="1" fill="#666" stroke="#888"/><path d="M1620 1010l3 3 5-8" stroke="#eee" stroke-width="1.400" fill="none"/>
<text x="1631" y="1014" font-size="8.800" fill="#c0c0c0">Keep aspect ratio</text>
<rect x="1606" y="1018" width="237" height="15" fill="#4a4a4a"/>
<circle cx="1821" cy="1025" r="5" fill="none" stroke="#aaa"/><path d="M1821 1022v5M1819 1025l2 2 2-2" fill="none" stroke="#aaa"/>
<path d="M1832 1021l7 8" stroke="#aaa"/><circle cx="1833" cy="1023" r="2.500" fill="none" stroke="#aaa"/>
<rect x="1605" y="33" width="1" height="1002" fill="#2a2a2a"/>
<rect x="1374" y="33" width="13" height="1002" fill="#3c3c3c"/>
<rect x="1386" y="33" width="1" height="1002" fill="#353535"/>
</svg>
<div id="wheel"><i></i></div>
<div id="sq"></div>
<svg width="1843" height="1037" viewBox="0 0 1843 1037" xmlns="http://www.w3.org/2000/svg" style="pointer-events:none">
<rect x="-8" y="-2" width="16" height="4" transform="translate(1410.500 122.500) rotate(30)" fill="#e8202c" stroke="#fff" stroke-width="1"/>
<circle cx="1436" cy="134" r="3" fill="none" stroke="#aaa"/>
</svg>
</body></html>
